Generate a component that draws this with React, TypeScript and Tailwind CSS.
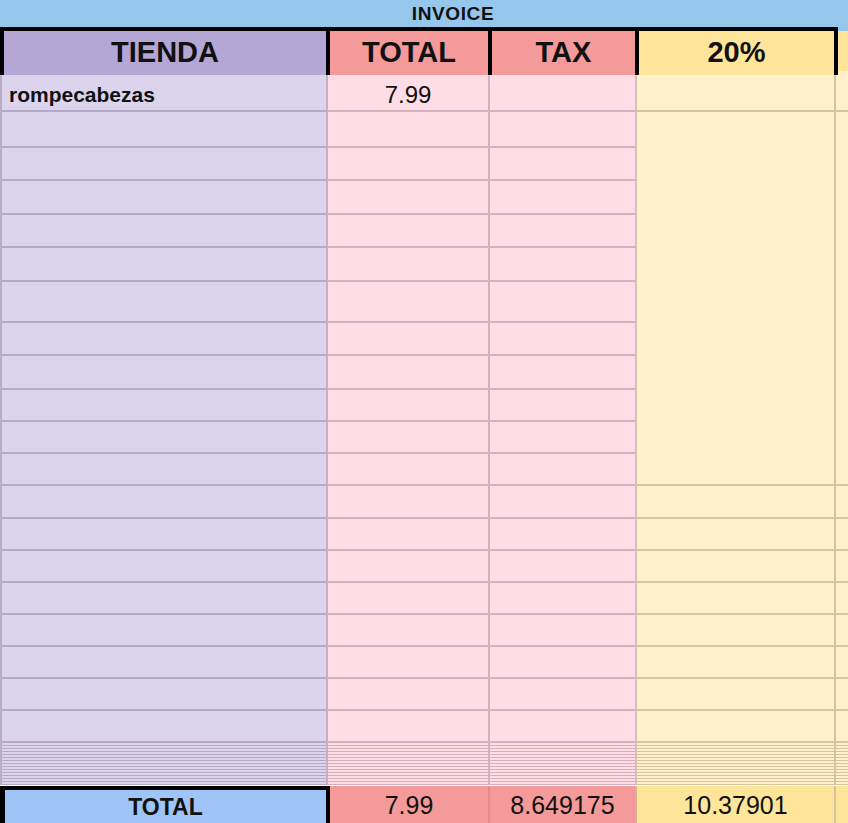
const rowHeights = [37, 36, 33, 34, 33, 34, 41, 33, 34, 32, 32, 32, 33, 32, 32, 32, 32, 32, 32, 32];

export default function App() {
  return (
    <div className="w-[848px] h-[823px] overflow-hidden bg-white font-['Liberation_Sans',Arial,sans-serif] text-[#111]">
      {/* title bar */}
      <div className="h-[27px] bg-[#95c6ec] flex items-center justify-center pl-[58px]">
        <span className="text-[19px] font-bold tracking-[0.6px] leading-none">INVOICE</span>
      </div>

      {/* header row */}
      <div className="flex h-[48px]">
        <div className="grid grid-cols-[322px_158px_143px_195px] gap-[4px] p-[4px] bg-black w-[838px]">
          <div className="bg-[#b4a7d6] flex items-center justify-center text-[29px] font-bold">TIENDA</div>
          <div className="bg-[#f49a9a] flex items-center justify-center text-[29px] font-bold">TOTAL</div>
          <div className="bg-[#f49a9a] flex items-center justify-center text-[29px] font-bold">TAX</div>
          <div className="bg-[#ffe599] flex items-center justify-center text-[29px] font-bold">20%</div>
        </div>
        <div className="flex-1 flex flex-col">
          <div className="h-[4px] bg-[#95c6ec]" />
          <div className="flex-1 bg-[#ffe599]" />
          <div className="h-[4px] bg-[#fff1cb]" />
        </div>
      </div>

      {/* data rows */}
      <div className="grid grid-cols-[328px_162px_147px_199px_12px] grid-rows-[37px_36px_33px_34px_33px_34px_41px_33px_34px_32px_32px_32px_33px_32px_32px_32px_32px_32px_32px_32px]">
        <div className="col-start-4 row-start-2 row-span-11 bg-[#fff1cb] border-r-2 border-b-2 border-[#d8c39e]" />
        <div className="col-start-5 row-start-2 row-span-11 bg-[#fff1cb] border-b-2 border-[#d8c39e]" />
        {rowHeights.map((_, i) => (
          <Row key={i} index={i} />
        ))}
      </div>

      {/* collapsed rows */}
      <div className="flex flex-col">
        {Array.from({ length: 14 }).map((_, i) => (
          <div key={i} className="grid grid-cols-[328px_162px_147px_199px_12px] h-[3px]">
            <div className="bg-[#dcd4ec] border-l-2 border-r-2 border-b border-l-[#b9aec9] border-r-[#c9adc2] border-b-[#b5aac8]" />
            <div className="bg-[#ffdde6] border-r-2 border-b border-[#d6b0bd]" />
            <div className="bg-[#ffdde6] border-r-2 border-b border-r-[#d8bfae] border-b-[#d6b0bd]" />
            <div className="bg-[#fff1cb] border-r-2 border-b border-[#d8c39e]" />
            <div className="bg-[#fff1cb] border-b border-[#d8c39e]" />
          </div>
        ))}
        <div className="h-px" />
      </div>

      {/* total row */}
      <div className="grid grid-cols-[330px_160px_147px_199px_12px] h-[42px]">
        <div className="bg-[#9fc5f8] border-l-[5px] border-t-4 border-r-4 border-black flex items-center justify-center text-[23px] font-bold pb-[4px]">
          TOTAL
        </div>
        <div className="bg-[#f59a9a] border-r-2 border-[#e08c8e] flex items-center justify-center text-[25px] pb-[4px]">7.99</div>
        <div className="bg-[#f59a9a] border-r-2 border-[#d9b58c] flex items-center justify-center text-[25px] pb-[4px]">8.649175</div>
        <div className="bg-[#ffe599] border-r-2 border-[#d8c39e] flex items-center justify-center text-[25px] pb-[4px]">10.37901</div>
        <div className="bg-[#ffe599]" />
      </div>
    </div>
  );
}

function Row({ index }: { index: number }) {
  const merged = index >= 1 && index <= 11;
  return (
    <>
      <div className="bg-[#dcd4ec] border-l-2 border-r-2 border-b-2 border-l-[#b9aec9] border-r-[#c9adc2] border-b-[#b5aac8] flex items-end pl-[7px] pb-[5px] text-[21px] leading-none font-bold">
        {index === 0 ? "rompecabezas" : ""}
      </div>
      <div className="bg-[#ffdde6] border-r-2 border-b-2 border-[#d6b0bd] flex items-end justify-center pb-[3px] text-[24px] leading-none">
        {index === 0 ? "7.99" : ""}
      </div>
      <div className="bg-[#ffdde6] border-r-2 border-b-2 border-r-[#d8bfae] border-b-[#d6b0bd]" />
      {!merged && (
        <>
          <div className="bg-[#fff1cb] border-r-2 border-b-2 border-[#d8c39e]" />
          <div className="bg-[#fff1cb] border-b-2 border-[#d8c39e]" />
        </>
      )}
    </>
  );
}
